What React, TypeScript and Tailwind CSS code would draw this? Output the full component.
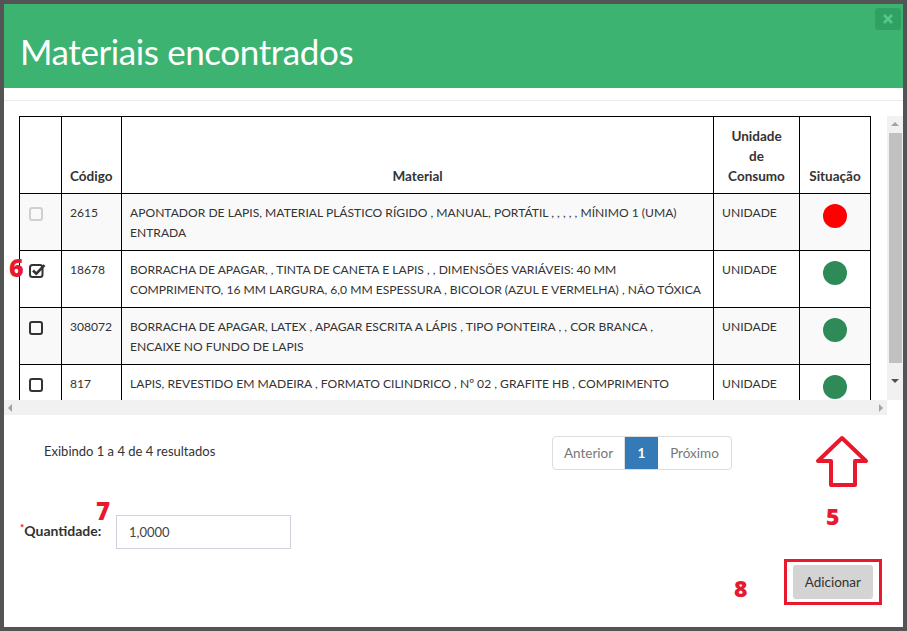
import React from 'react';

type Row = {
  code: string;
  lines: string[];
  status: 'red' | 'green';
  check: 'disabled' | 'checked' | 'empty';
  striped: boolean;
};

const rows: Row[] = [
  {
    code: '2615',
    lines: ['APONTADOR DE LAPIS, MATERIAL PLÁSTICO RÍGIDO , MANUAL, PORTÁTIL , , , , , MÍNIMO 1 (UMA)', 'ENTRADA'],
    status: 'red',
    check: 'disabled',
    striped: true,
  },
  {
    code: '18678',
    lines: [
      'BORRACHA DE APAGAR, , TINTA DE CANETA E LAPIS , , DIMENSÕES VARIÁVEIS: 40 MM',
      'COMPRIMENTO, 16 MM LARGURA, 6,0 MM ESPESSURA , BICOLOR (AZUL E VERMELHA) , NÃO TÓXICA',
    ],
    status: 'green',
    check: 'checked',
    striped: false,
  },
  {
    code: '308072',
    lines: ['BORRACHA DE APAGAR, LATEX , APAGAR ESCRITA A LÁPIS , TIPO PONTEIRA , , COR BRANCA ,', 'ENCAIXE NO FUNDO DE LAPIS'],
    status: 'green',
    check: 'empty',
    striped: true,
  },
  {
    code: '817',
    lines: ['LAPIS, REVESTIDO EM MADEIRA , FORMATO CILINDRICO , Nº 02 , GRAFITE HB , COMPRIMENTO'],
    status: 'green',
    check: 'empty',
    striped: false,
  },
];

const CheckBox = ({ kind }: { kind: Row['check'] }) => {
  if (kind === 'checked') {
    return (
      <svg width="17" height="15" viewBox="0 0 17 15" className="block -mt-[1px]">
        <rect x="1" y="2" width="12.5" height="12" rx="2.5" fill="none" stroke="#333" strokeWidth="2" />
        <path d="M4 7.5 L7.3 10.6 L15.5 2.2" fill="none" stroke="#333" strokeWidth="2.6" />
      </svg>
    );
  }
  return (
    <div
      className={`w-[14px] h-[14px] rounded-[3px] border-2 ${kind === 'disabled' ? 'border-[#d0d0d0]' : 'border-[#333]'}`}
    />
  );
};

export default function App() {
  const font = { fontFamily: 'Lato, "Open Sans", sans-serif' };
  const mark = { fontFamily: '"Open Sans", "Liberation Sans", sans-serif' };
  return (
    <div className="w-[907px] h-[631px] bg-[#545454] p-[4px] overflow-hidden" style={font}>
      <div className="relative bg-white h-full flex flex-col text-[#333]">
        {/* cabeçalho verde */}
        <div className="h-[84px] bg-[#3cb371] flex justify-between items-start pl-[16px] pr-[2px]">
          <h1 className="text-[35px] leading-none text-white mt-[30px] tracking-[-0.4px]">Materiais encontrados</h1>
          <button className="mt-[4px] w-[26px] h-[22px] rounded-[3px] bg-[#31a163] flex items-center justify-center">
            <svg width="12" height="12" viewBox="0 0 12 12">
              <path d="M2 2 L10 10 M10 2 L2 10" stroke="#55c98a" strokeWidth="2.6" />
            </svg>
          </button>
        </div>
        <div className="h-[12px]" />
        <div className="border-t border-[#ebebeb] h-[16px]" />

        {/* tabela com rolagem */}
        <div className="flex">
          <div className="w-[883px] flex flex-col">
            <div className="h-[284px] overflow-hidden pl-[15px]">
              <table className="border-collapse text-[12.1px] w-[851px] table-fixed">
                <colgroup>
                  <col className="w-[42px]" />
                  <col className="w-[60px]" />
                  <col className="w-[592px]" />
                  <col className="w-[86px]" />
                  <col className="w-[71px]" />
                </colgroup>
                <thead>
                  <tr className="font-bold text-[13.5px] leading-[20px]">
                    <th className="border border-black h-[77px] align-bottom" />
                    <th className="border border-black align-bottom text-left px-[8px] pb-[7px]">Código</th>
                    <th className="border border-black align-bottom text-center px-[8px] pb-[7px]">Material</th>
                    <th className="border border-black align-bottom text-center px-[8px] pb-[7px]">
                      Unidade
                      <br />
                      de
                      <br />
                      Consumo
                    </th>
                    <th className="border border-black align-bottom text-center px-[4px] pb-[7px]">Situação</th>
                  </tr>
                </thead>
                <tbody>
                  {rows.map((r) => (
                    <tr key={r.code} className={`leading-[20px] ${r.striped ? 'bg-[#f9f9f9]' : 'bg-white'}`}>
                      <td className="border border-black h-[57px] align-top pt-[13px] pl-[9px]">
                        <CheckBox kind={r.check} />
                      </td>
                      <td className="border border-black align-top pt-[9px] px-[8px]">{r.code}</td>
                      <td className="border border-black align-top pt-[9px] px-[8px]">
                        {r.lines.map((l) => (
                          <div key={l} className="whitespace-nowrap">
                            {l}
                          </div>
                        ))}
                      </td>
                      <td className="border border-black align-top pt-[9px] px-[8px]">UNIDADE</td>
                      <td className="border border-black align-top pt-[10px]">
                        <div
                          className={`mx-auto w-[24px] h-[24px] rounded-full ${
                            r.status === 'red' ? 'bg-[#ff0000]' : 'bg-[#2e8b57]'
                          }`}
                        />
                      </td>
                    </tr>
                  ))}
                </tbody>
              </table>
            </div>
            {/* barra de rolagem horizontal */}
            <div className="h-[15px] bg-[#f1f1f1] flex items-center justify-between px-[4px]">
              <span className="w-0 h-0 border-y-[4px] border-y-transparent border-r-[4px] border-r-[#a3a3a3]" />
              <span className="w-0 h-0 border-y-[4px] border-y-transparent border-l-[4px] border-l-[#a3a3a3]" />
            </div>
          </div>
          {/* barra de rolagem vertical */}
          <div className="w-[16px] h-[284px] bg-[#f1f1f1] flex flex-col items-center">
            <span className="mt-[6px] w-0 h-0 border-x-[4px] border-x-transparent border-b-[4px] border-b-[#a3a3a3]" />
            <div className="mt-[7px] w-[13px] h-[230px] bg-[#c1c1c1]" />
            <span className="mt-[16px] w-0 h-0 border-x-[4px] border-x-transparent border-t-[4px] border-t-[#505050]" />
          </div>
        </div>

        {/* rodapé da tabela */}
        <div className="flex items-center mt-[21px] pl-[40px]">
          <div className="w-[508px] text-[13px] -mt-[3px]">Exibindo 1 a 4 de 4 resultados</div>
          <div className="flex h-[34px] text-[13.5px] text-[#777] border border-[#ddd] rounded-[4px] overflow-hidden">
            <span className="w-[72px] flex items-center justify-center border-r border-[#ddd]">Anterior</span>
            <span className="w-[33px] flex items-center justify-center bg-[#337ab7] text-white font-bold">1</span>
            <span className="w-[73px] flex items-center justify-center">Próximo</span>
          </div>
        </div>

        {/* quantidade */}
        <div className="flex items-center mt-[45px] pl-[16px]">
          <label className="text-[14px] font-bold -mt-[3px] w-[96px]">
            <span className="text-[#e00] text-[10px] align-top">*</span>Quantidade:
          </label>
          <input
            readOnly
            value="1,0000"
            className="w-[175px] h-[34px] border border-[#cdd2dc] px-[12px] text-[13px] text-[#444] outline-none"
            style={font}
          />
        </div>

        {/* botão adicionar */}
        <div className="flex justify-end mt-[10px] pr-[21px]">
          <div className="border-[3px] border-[#e8192c] px-[6px] py-[3px]">
            <button className="h-[34px] px-[12px] rounded-[3px] bg-[#d4d4d4] text-[13.5px] text-[#333]">Adicionar</button>
          </div>
        </div>

        {/* anotações */}
        <span style={mark} className="absolute left-[5px] top-[251px] text-[25px] font-extrabold text-[#e8192c] leading-none">6</span>
        <span style={mark} className="absolute left-[92px] top-[495px] text-[24px] font-extrabold text-[#e8192c] leading-none">7</span>
        <span style={mark} className="absolute left-[822px] top-[501px] text-[23px] font-extrabold text-[#e8192c] leading-none">5</span>
        <span style={mark} className="absolute left-[730px] top-[573px] text-[23px] font-extrabold text-[#e8192c] leading-none">8</span>
        <svg className="absolute left-[810px] top-[430px]" width="56" height="56" viewBox="0 0 56 56">
          <path d="M28 4 L52 27 L41 27 L41 51 L17 51 L17 27 L4 27 Z" fill="none" stroke="#e8192c" strokeWidth="4" strokeLinejoin="round" />
        </svg>
      </div>
    </div>
  );
}
